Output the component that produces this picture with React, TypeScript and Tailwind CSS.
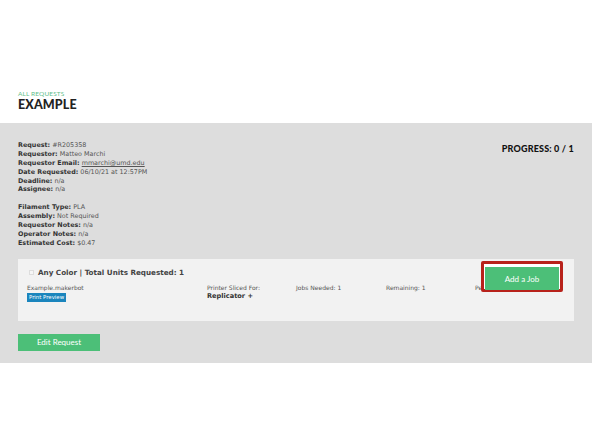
const BODY = { fontFamily: '"DejaVu Sans", Verdana, sans-serif' };
const HEAD = { fontFamily: 'Lato, "Open Sans", sans-serif' };

const DETAILS_A: [string, string, boolean?][] = [
  ['Request:', '#R205358'],
  ['Requestor:', 'Matteo Marchi'],
  ['Requestor Email:', 'mmarchi@umd.edu', true],
  ['Date Requested:', '06/10/21 at 12:57PM'],
  ['Deadline:', 'n/a'],
  ['Assignee:', 'n/a'],
];

const DETAILS_B: [string, string][] = [
  ['Filament Type:', 'PLA'],
  ['Assembly:', 'Not Required'],
  ['Requestor Notes:', 'n/a'],
  ['Operator Notes:', 'n/a'],
  ['Estimated Cost:', '$0.47'],
];

function Line({ label, value, link }: { label: string; value: string; link?: boolean }) {
  return (
    <div className="h-[8.9px] leading-[8.9px] whitespace-nowrap">
      <span className="font-bold text-[#333]">{label}</span>{' '}
      <span className={link ? 'underline text-[#555]' : 'text-[#555]'}>{value}</span>
    </div>
  );
}

export default function App() {
  return (
    <div className="w-[592px] h-[444px] bg-white overflow-hidden">
      {/* header */}
      <div className="h-[123px] px-[18px] pt-[90px]">
        <div className="text-[6.5px] leading-[8px] text-[#5fc08b] tracking-[0.02em]" style={HEAD}>
          ALL REQUESTS
        </div>
        <div className="text-[12.5px] leading-[13px] font-black text-[#222] tracking-[0.01em]" style={HEAD}>
          EXAMPLE
        </div>
      </div>

      {/* gray band */}
      <div className="h-[240px] bg-[#dddddd] px-[18px] pt-[18px]">
        <div className="flex justify-between items-start">
          <div className="text-[6.4px]" style={BODY}>
            {DETAILS_A.map(([l, v, link]) => (
              <Line key={l} label={l} value={v} link={link} />
            ))}
            <div className="h-[9px]" />
            {DETAILS_B.map(([l, v]) => (
              <Line key={l} label={l} value={v} />
            ))}
          </div>
          <div className="pt-[3px] text-[9px] leading-[10px] font-black text-[#111] tracking-[0.02em]" style={HEAD}>
            PROGRESS: 0 / 1
          </div>
        </div>

        {/* job card */}
        <div className="relative mt-[11px] h-[62px] bg-[#f2f2f2] px-[9px] pt-[9px]" style={BODY}>
          <div className="flex items-center gap-[2px] text-[7.2px] leading-[10px] font-bold text-[#444]">
            <span className="w-[5px] h-[5px] border border-[#ddd] bg-[#f6f6f6] mx-[2px]" />
            <span>Any Color | Total Units Requested: 1</span>
          </div>
          <div className="grid grid-cols-[180px_89px_90px_89px_1fr] mt-[6px] text-[6px] leading-[8px] text-[#555]">
            <div>
              <div>Example.makerbot</div>
              <div className="mt-[1px] inline-block bg-[#1b85bd] text-white text-[5.4px] leading-[9px] px-[2px]">
                Print Preview
              </div>
            </div>
            <div>
              <div>Printer Sliced For:</div>
              <div className="font-bold text-[#333] text-[6.6px] leading-[9px]">Replicator +</div>
            </div>
            <div>Jobs Needed: 1</div>
            <div>Remaining: 1</div>
            <div>Pending: 1</div>
          </div>

          {/* highlighted button */}
          <div className="absolute left-[463px] top-[2px] w-[82px] h-[31px] border-[3px] border-[#b8221b] rounded-[2px] bg-white p-[1px]">
            <button
              className="w-full h-full bg-[#4cbf78] text-white text-[8px] leading-none"
              style={HEAD}
            >
              Add a Job
            </button>
          </div>
        </div>

        <button
          className="mt-[13px] w-[82px] h-[17px] bg-[#4cbf78] text-white text-[8px] leading-none"
          style={HEAD}
        >
          Edit Request
        </button>
      </div>
    </div>
  );
}
